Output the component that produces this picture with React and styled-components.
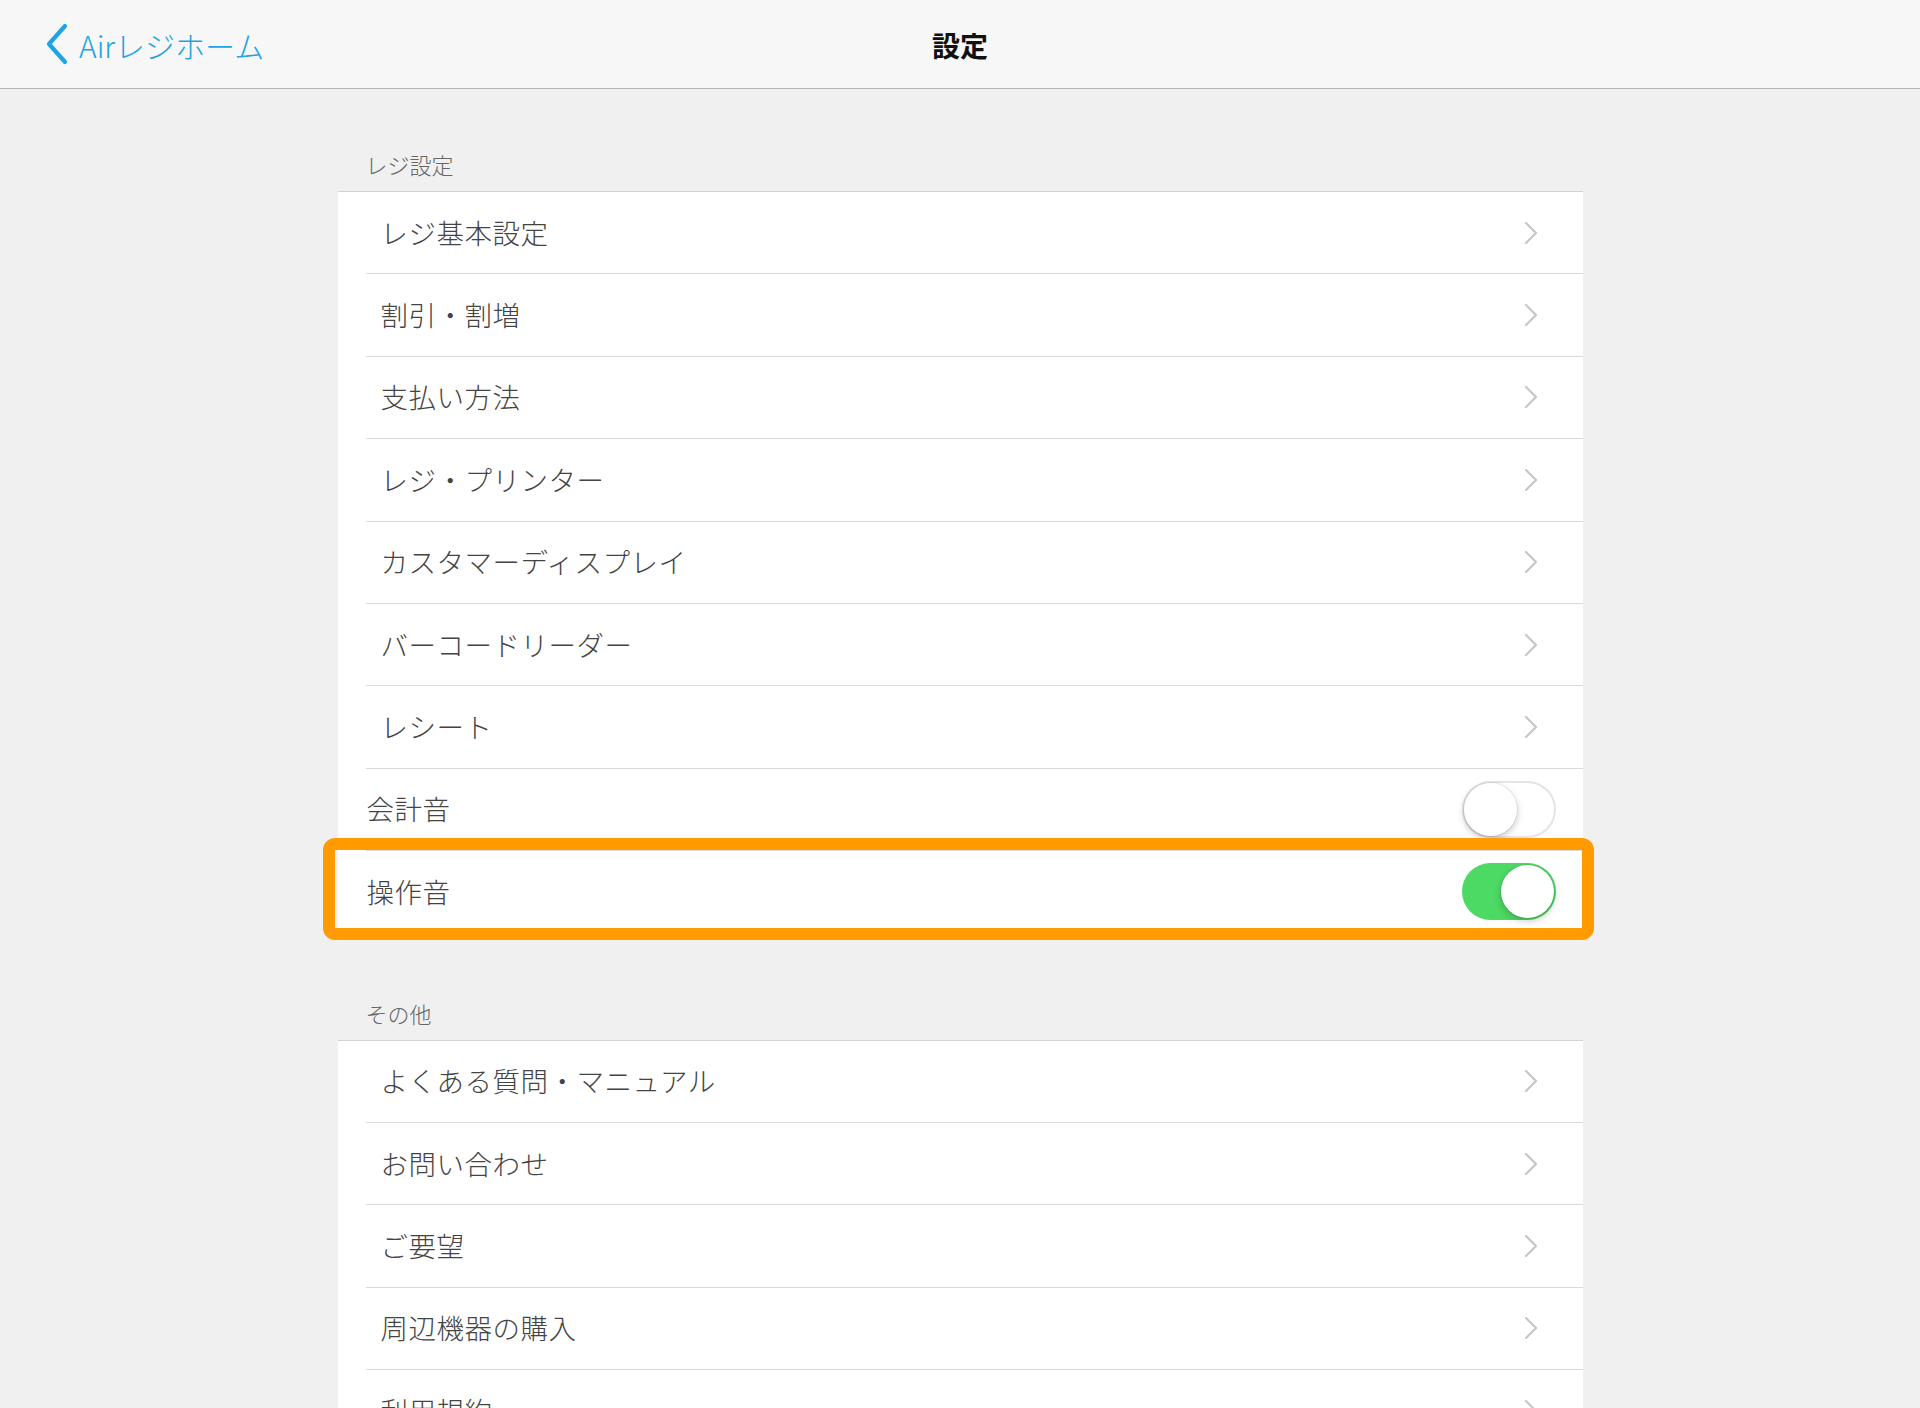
import React, { useState } from 'react';
import styled, { createGlobalStyle } from 'styled-components';

const GlobalStyle = createGlobalStyle`
  html, body {
    margin: 0;
    padding: 0;
    background: #f0f0f0;
    font-family: 'Noto Sans CJK JP', 'Noto Sans', sans-serif;
  }
  body {
    height: 1408px;
    overflow: hidden;
  }
`;

const sections = [
  {
    title: 'レジ設定',
    rows: [
      { label: 'レジ基本設定' },
      { label: '割引・割増' },
      { label: '支払い方法' },
      { label: 'レジ・プリンター' },
      { label: 'カスタマーディスプレイ' },
      { label: 'バーコードリーダー' },
      { label: 'レシート' },
      { label: '会計音', toggle: false },
      { label: '操作音', toggle: true, highlight: true },
    ],
  },
  {
    title: 'その他',
    rows: [
      { label: 'よくある質問・マニュアル' },
      { label: 'お問い合わせ' },
      { label: 'ご要望' },
      { label: '周辺機器の購入' },
      { label: '利用規約' },
    ],
  },
];

const BackChevron = () => (
  <svg width="24" height="42" viewBox="0 0 24 42">
    <polyline
      points="20,3 4,21 20,39"
      fill="none"
      stroke="#1ea3e3"
      strokeWidth="4.2"
      strokeLinecap="round"
      strokeLinejoin="round"
    />
  </svg>
);

const Chevron = () => (
  <svg width="14" height="24" viewBox="0 0 14 24">
    <polyline
      points="2,2 12,12 2,22"
      fill="none"
      stroke="#c6c6c8"
      strokeWidth="2.2"
      strokeLinecap="round"
      strokeLinejoin="round"
    />
  </svg>
);

const SettingRow = ({ row }) => {
  const [on, setOn] = useState(row.toggle);
  const isToggle = row.toggle !== undefined;
  return (
    <Row $toggle={isToggle} $highlight={row.highlight}>
      <RowLabel>{row.label}</RowLabel>
      {isToggle ? (
        <Switch $on={on} onClick={() => setOn((prev) => !prev)}>
          <Knob $on={on} />
        </Switch>
      ) : (
        <Chevron />
      )}
    </Row>
  );
};

const App = () => {
  return (
    <>
      <GlobalStyle />
      <NavBar>
        <BackLink>
          <BackChevron />
          <span>Airレジホーム</span>
        </BackLink>
        <NavTitle>設定</NavTitle>
        <div />
      </NavBar>
      <Content>
        {sections.map((section) => (
          <Section key={section.title}>
            <SectionTitle>{section.title}</SectionTitle>
            <Card>
              {section.rows.map((row) => (
                <SettingRow key={row.label} row={row} />
              ))}
            </Card>
          </Section>
        ))}
      </Content>
    </>
  );
};

export default App;

const NavBar = styled.header`
  height: 88px;
  background: #f7f7f7;
  border-bottom: 1px solid #b4b4b4;
  display: grid;
  grid-template-columns: 1fr auto 1fr;
  align-items: center;
`;

const BackLink = styled.a`
  display: flex;
  align-items: center;
  gap: 10px;
  padding-left: 45px;
  color: #1ea3e3;
  font-size: 30px;
  font-weight: 300;
  cursor: pointer;

  span {
    margin-top: 2px;
  }
`;

const NavTitle = styled.h1`
  margin: 0;
  padding-top: 2px;
  font-size: 28px;
  font-weight: 700;
  color: #111;
`;

const Content = styled.main`
  width: 1245px;
  margin: 0 auto;
`;

const Section = styled.section`
  & + & {
    margin-top: 4px;
  }
`;

const SectionTitle = styled.h2`
  margin: 0;
  height: 102px;
  box-sizing: border-box;
  display: flex;
  align-items: flex-end;
  padding: 0 0 15px 28px;
  font-size: 22px;
  line-height: 24px;
  font-weight: 300;
  color: #666;
`;

const Card = styled.div`
  background: #fff;
  border-top: 1px solid #d2d2d2;
`;

const Row = styled.div`
  position: relative;
  height: 82.4px;
  box-sizing: border-box;
  margin-left: 28px;
  border-bottom: 1px solid #dadada;
  display: flex;
  align-items: center;
  justify-content: space-between;
  padding: ${(p) => (p.$toggle ? '0 27px 0 1px' : '0 45px 0 15px')};

  &::after {
    content: '';
    display: ${(p) => (p.$highlight ? 'block' : 'none')};
    position: absolute;
    top: -13px;
    bottom: -7px;
    left: -43px;
    right: -11px;
    border: 12px solid #ff9a00;
    border-radius: 12px;
    pointer-events: none;
  }
`;

const RowLabel = styled.span`
  font-size: 27.5px;
  font-weight: 300;
  color: #444;
  letter-spacing: 0.5px;
  margin-top: -2px;
`;

const Switch = styled.div`
  position: relative;
  width: 94px;
  height: 57px;
  border-radius: 29px;
  box-sizing: border-box;
  background: ${(p) => (p.$on ? '#4cd964' : '#fff')};
  box-shadow: ${(p) => (p.$on ? 'none' : 'inset 0 0 0 2px #e4e4e4')};
  cursor: pointer;
`;

const Knob = styled.div`
  position: absolute;
  top: 2px;
  left: ${(p) => (p.$on ? '39px' : '2px')};
  width: 53px;
  height: 53px;
  border-radius: 50%;
  background: #fff;
  box-shadow: 0 3px 7px rgba(0, 0, 0, 0.22), 0 0 0 1px rgba(0, 0, 0, 0.06);
`;
